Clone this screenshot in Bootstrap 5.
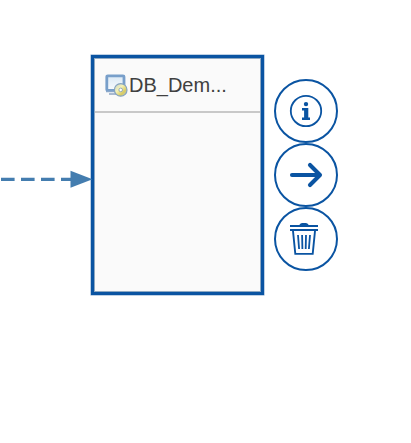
<!DOCTYPE html>
<html lang="en">
<head>
<meta charset="utf-8">
<title>Pipeline node</title>
<link href="https://cdn.jsdelivr.net/npm/bootstrap@5.3.0/dist/css/bootstrap.min.css" rel="stylesheet">
<style>
body{background:#fff;font-family:"Liberation Sans",Arial,sans-serif;overflow:hidden}
.canvas{width:411px;height:443px}
.link-line{left:0;top:168px}
.node{left:91px;top:55px;width:173px;height:240px;background:#fafafa;border:3px solid #0a54a2;box-shadow:0 0 0 .5px #7fa3cc,inset 0 0 0 1px #8fa9c2}
.node-head{height:56px;margin:-1px 1px 0;border-bottom:2px solid #c8c8c8;padding:2px 0 0 10px}
.node-title{font-size:20px;line-height:24px;color:#404040}
.node-icon{width:24px;height:24px;margin-top:2px}
.actions{left:274px;top:79px}
.action{width:64px;height:64px;border:2px solid #0a54a2;background:#fff;color:#0a54a2}
</style>
</head>
<body>
<main class="canvas position-relative">
  <section class="node position-absolute">
    <header class="node-head d-flex align-items-center">
      <svg class="node-icon flex-shrink-0" viewBox="0 0 24 24">
        <defs>
          <linearGradient id="screen" x2="0" y2="1"><stop stop-color="#dbe9f5"/><stop offset="1" stop-color="#f8fbfe"/></linearGradient>
          <linearGradient id="disc" x2="1" y2="1"><stop stop-color="#c3d0d4"/><stop offset=".4" stop-color="#f5f2b5"/><stop offset=".7" stop-color="#d8cb62"/><stop offset="1" stop-color="#b9cbd6"/></linearGradient>
        </defs>
        <path d="M4 19h9v2H4z" fill="#a9bad0"/>
        <rect x="1.8" y="1.8" width="17.2" height="14.6" rx="1" fill="url(#screen)" stroke="#789fca" stroke-width="2.8"/>
        <path d="M1 17.5h10" stroke="#8ba8cb" stroke-width="1.5"/>
        <circle cx="15.7" cy="15.9" r="6.3" fill="url(#disc)" stroke="#86a3c0" stroke-width="1.2"/>
        <circle cx="15.7" cy="15.9" r="1.8" fill="#fff" stroke="#91a9bc" stroke-width="1"/>
      </svg>
      <span class="node-title text-nowrap">DB_Dem...</span>
    </header>
  </section>
  <svg class="link-line position-absolute" width="94" height="24" viewBox="0 0 94 24">
    <path d="M1 11.3H75" stroke="#447daf" stroke-width="3.3" stroke-dasharray="13.6 6.4"/>
    <path d="M70.5 2.8L92.5 11.3L70.5 19.8Z" fill="#447daf"/>
  </svg>
  <nav class="actions position-absolute d-flex flex-column">
    <button class="action rounded-circle p-0 d-flex align-items-center justify-content-center" aria-label="Info">
      <svg width="34" height="34" viewBox="0 0 34 34" fill="currentColor">
        <circle cx="17" cy="17" r="15.2" fill="none" stroke="currentColor" stroke-width="1.8"/>
        <circle cx="17" cy="10.1" r="2.2"/>
        <path d="M13 14h6.3v9.6H21V26h-8v-2.4h2.1v-7.2H13z"/>
      </svg>
    </button>
    <button class="action rounded-circle p-0 d-flex align-items-center justify-content-center" aria-label="Next">
      <svg width="34" height="34" viewBox="0 0 34 34" fill="none" stroke="currentColor" stroke-width="4.1" stroke-linecap="round" stroke-linejoin="round">
        <path d="M3 17H30M21 7L31 17L21 27"/>
      </svg>
    </button>
    <button class="action rounded-circle p-0 d-flex align-items-center justify-content-center" aria-label="Delete">
      <svg width="34" height="34" viewBox="0 0 34 34" fill="none" stroke="currentColor">
        <path d="M1 4H29M1 8H29" stroke-width="2"/>
        <path d="M10 3.6Q11 1 13 1h4q2 0 3 2.6z" fill="currentColor" stroke="none"/>
        <path d="M3.9 8L6.3 31.9H23.7L26.1 8" stroke-width="1.9"/>
        <path d="M9 13L10.1 27M13.1 13L13.4 27M17 13L16.7 27M21 13L19.9 27" stroke-width="1.8"/>
      </svg>
    </button>
  </nav>
</main>
<script src="https://cdn.jsdelivr.net/npm/bootstrap@5.3.0/dist/js/bootstrap.bundle.min.js"></script>
</body>
</html>
